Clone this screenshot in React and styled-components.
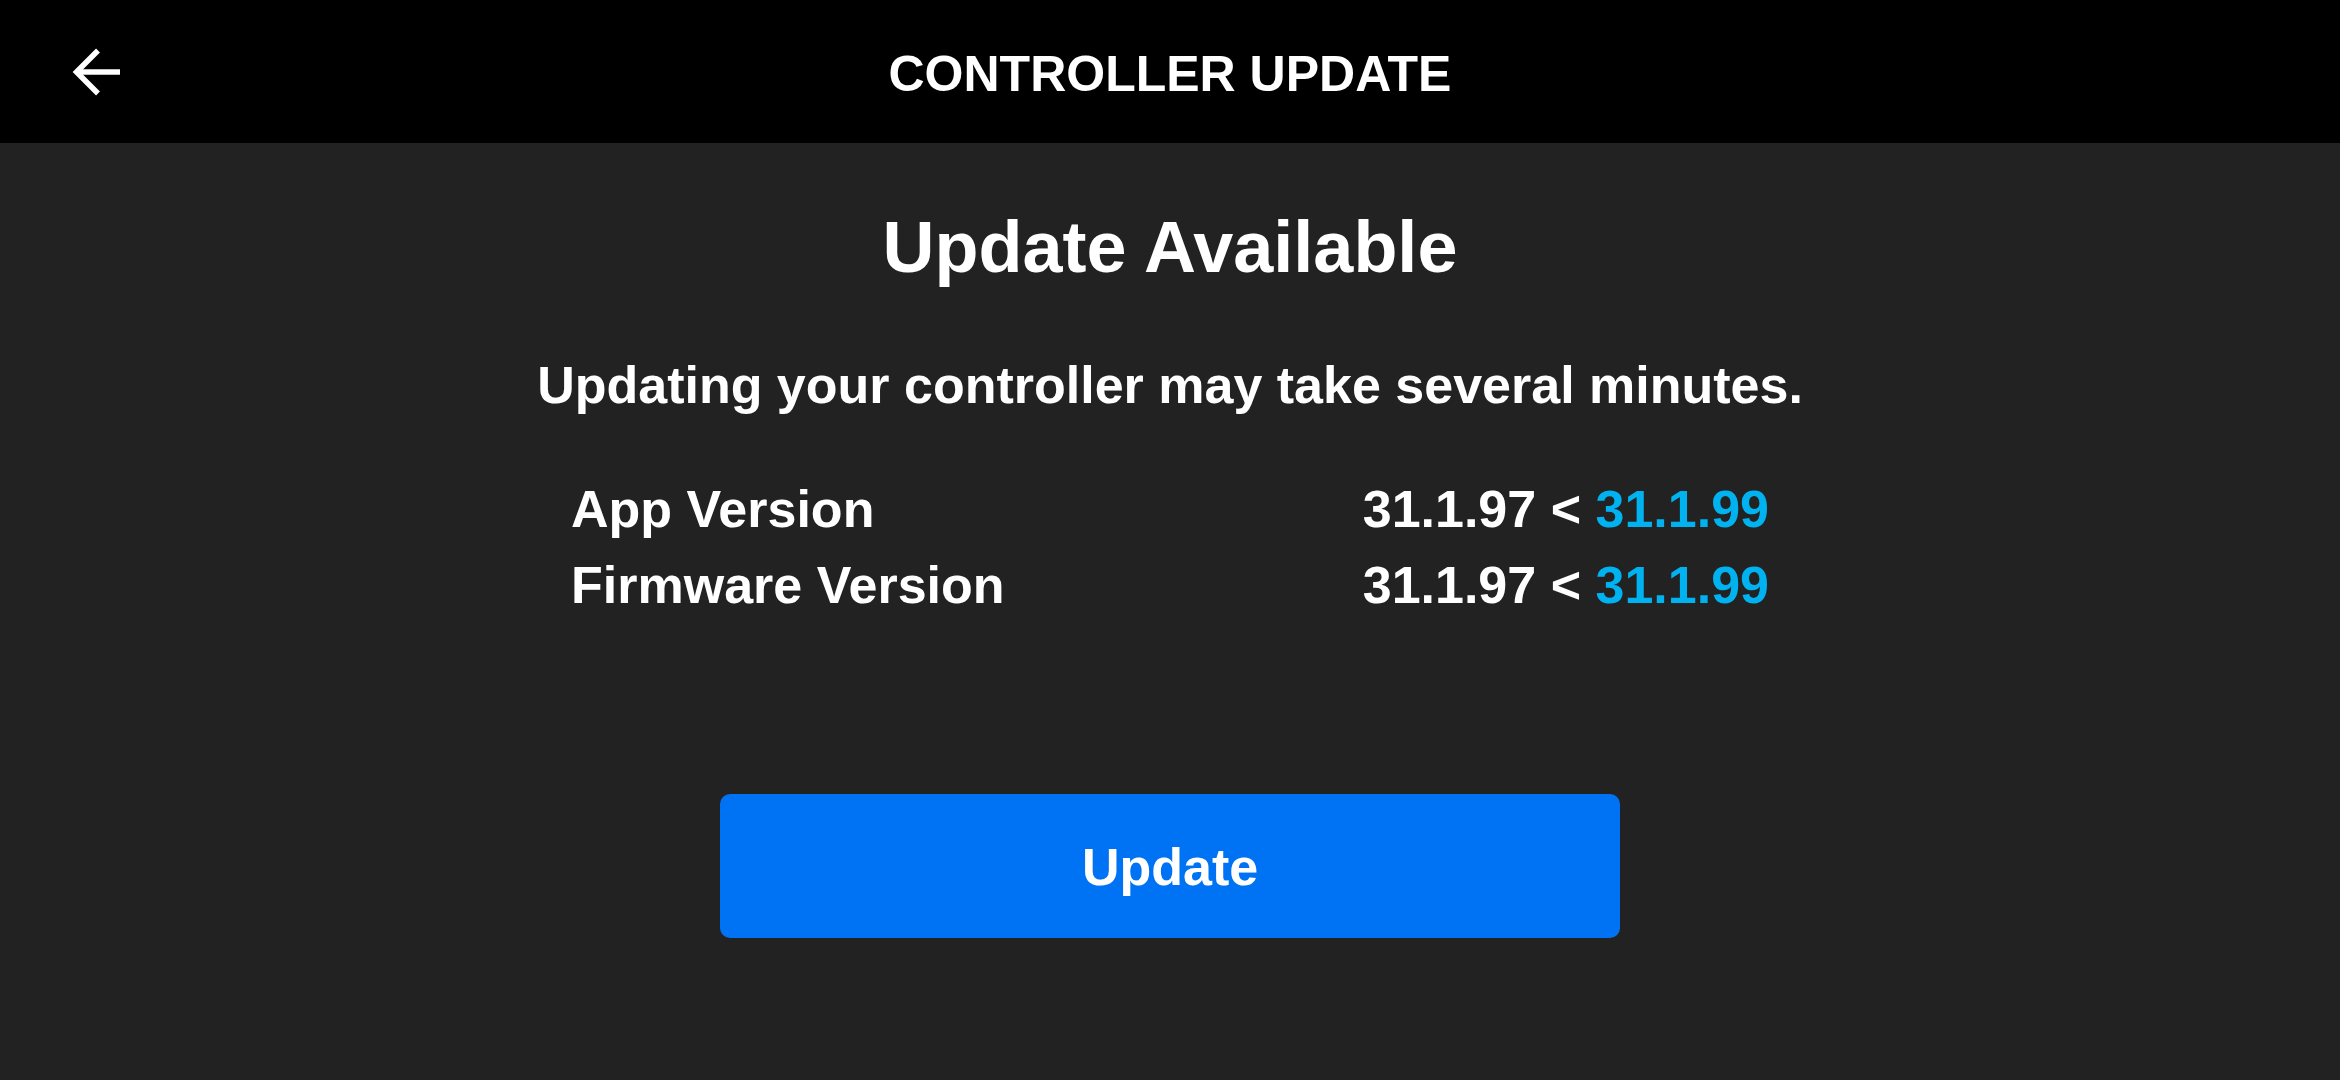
import React from "react";
import styled, { createGlobalStyle } from "styled-components";

const Global = createGlobalStyle`
  html, body { margin: 0; padding: 0; background: #222222; }
  body { font-family: "Liberation Sans", Arial, sans-serif; color: #fff; }
  * { box-sizing: border-box; }
`;

const Page = styled.div`
  width: 2340px;
  height: 1080px;
  display: flex;
  flex-direction: column;
  background: #222222;
  overflow: hidden;
`;

const Header = styled.header`
  height: 143px;
  flex: none;
  background: #000;
  display: grid;
  grid-template-columns: 1fr auto 1fr;
  align-items: center;
  padding: 4px 0 0 72px;
`;

const BackButton = styled.button`
  width: 48px;
  height: 48px;
  padding: 0;
  border: none;
  background: transparent;
  display: flex;
  justify-self: start;
  margin-top: -4px;
  cursor: pointer;
`;

const HeaderTitle = styled.h1`
  margin: 0;
  font-size: 50px;
  line-height: 1;
  font-weight: 700;
  letter-spacing: 0;
  color: #fff;
  text-transform: uppercase;
  margin-left: -72px;
`;

const Body = styled.main`
  flex: 1;
  display: flex;
  flex-direction: column;
  align-items: center;
  padding-top: 68px;
`;

const Title = styled.h2`
  margin: 0;
  font-size: 72px;
  line-height: 1;
  font-weight: 700;
`;

const Subtitle = styled.p`
  margin: 76px 0 0;
  font-size: 52px;
  line-height: 1;
  font-weight: 700;
`;

const VersionTable = styled.div`
  width: 1198px;
  margin-top: 60px;
  display: flex;
  flex-direction: column;
`;

const VersionRow = styled.div`
  display: flex;
  justify-content: space-between;
  align-items: center;
  height: 76px;
  font-size: 52px;
  line-height: 76px;
  font-weight: 700;
`;

const Label = styled.span``;

const Values = styled.span`
  white-space: pre;
`;

const NewVersion = styled.span`
  color: #00b2f0;
`;

const UpdateButton = styled.button`
  margin-top: 171px;
  width: 900px;
  height: 144px;
  border: none;
  border-radius: 10px;
  background: #0073f5;
  color: #fff;
  font-family: "Liberation Sans", Arial, sans-serif;
  font-size: 52px;
  font-weight: 700;
  display: flex;
  align-items: center;
  justify-content: center;
  padding-top: 3px;
  cursor: pointer;
`;

const BackArrow = () => (
  <svg width="48" height="48" viewBox="0 0 48 48" fill="none">
    <path d="M48 24H5" stroke="#fff" strokeWidth="5.5" />
    <path d="M26 2.5L4.5 24L26 45.5" stroke="#fff" strokeWidth="5.5" strokeLinejoin="miter" />
  </svg>
);

const versions = [
  { label: "App Version", current: "31.1.97", next: "31.1.99" },
  { label: "Firmware Version", current: "31.1.97", next: "31.1.99" },
];

export default function App() {
  return (
    <>
      <Global />
      <Page>
        <Header>
          <BackButton aria-label="Back">
            <BackArrow />
          </BackButton>
          <HeaderTitle>Controller Update</HeaderTitle>
          <span />
        </Header>
        <Body>
          <Title>Update Available</Title>
          <Subtitle>Updating your controller may take several minutes.</Subtitle>
          <VersionTable>
            {versions.map((v) => (
              <VersionRow key={v.label}>
                <Label>{v.label}</Label>
                <Values>
                  {v.current} {"< "}
                  <NewVersion>{v.next}</NewVersion>
                </Values>
              </VersionRow>
            ))}
          </VersionTable>
          <UpdateButton>Update</UpdateButton>
        </Body>
      </Page>
    </>
  );
}
